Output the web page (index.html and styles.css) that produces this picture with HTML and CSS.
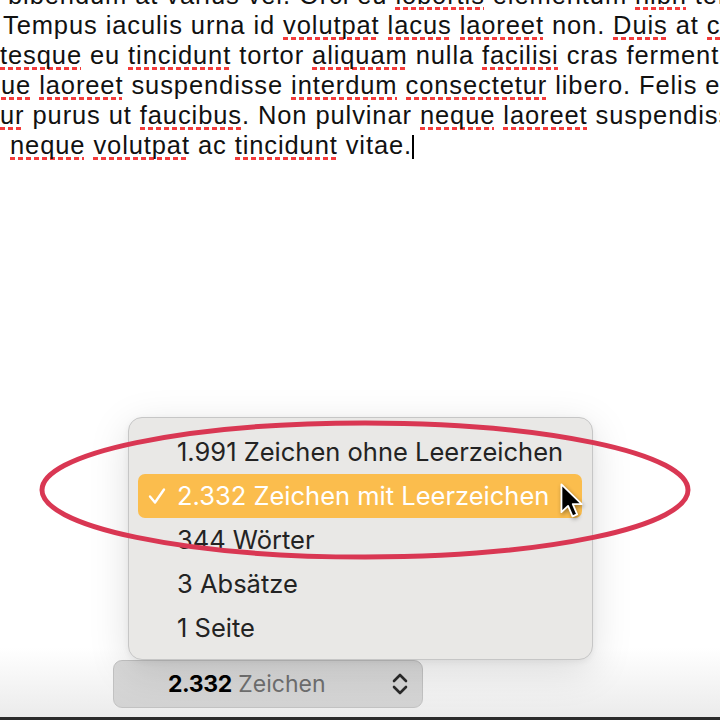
FILE: index.html
```html
<!DOCTYPE html>
<html lang="de">
<head>
    <meta charset="UTF-8">
    <meta name="viewport" content="width=device-width, initial-scale=1.0">
    <title>Zeichenzahl</title>
    <link rel="stylesheet" href="styles.css">
</head>
<body>
    <div class="doc">
        <div class="line l1">bibendum at varius vel. Orci eu <span class="typo">lobortis</span> elementum <span class="typo">nibh</span> tellus</div>
        <div class="line l2">Tempus iaculis urna id <span class="typo">volutpat</span> <span class="typo">lacus</span> <span class="typo">laoreet</span> non. <span class="typo">Duis</span> at <span class="typo">consequat</span></div>
        <div class="line l3"><span class="typo">tesque</span> eu <span class="typo">tincidunt</span> tortor <span class="typo">aliquam</span> nulla <span class="typo">facilisi</span> cras fermentum</div>
        <div class="line l4"><span class="typo">ue</span> <span class="typo">laoreet</span> suspendisse <span class="typo">interdum</span> <span class="typo">consectetur</span> libero. Felis eget</div>
        <div class="line l5"><span class="typo">ur</span> purus ut <span class="typo">faucibus</span>. Non pulvinar <span class="typo">neque</span> <span class="typo">laoreet</span> suspendisse</div>
        <div class="line l6"><span class="typo">neque</span> <span class="typo">volutpat</span> ac <span class="typo">tincidunt</span> vitae.<span class="caret"></span></div>
    </div>

    <div class="statusbar">
        <div class="popup">
            <ul class="menu">
                <li>1.991 Zeichen ohne Leerzeichen</li>
                <li class="selected">
                    <svg class="check" width="20" height="20" viewBox="0 0 20 20">
                        <path d="M3 10.5 L8 16.5 L17 3.5" fill="none" stroke="#fff" stroke-width="2.4" stroke-linecap="round" stroke-linejoin="round"/>
                    </svg>
                    2.332 Zeichen mit Leerzeichen
                </li>
                <li>344 Wörter</li>
                <li>3 Absätze</li>
                <li>1 Seite</li>
            </ul>
            <button class="count-btn">
                <span class="count"><b>2.332</b> Zeichen</span>
                <svg class="updown" width="18" height="24" viewBox="0 0 18 24">
                    <path d="M3 9 L9 3 L15 9 M3 15 L9 21 L15 15" fill="none" stroke="#2a2a2a" stroke-width="2.6" stroke-linecap="round" stroke-linejoin="round"/>
                </svg>
            </button>
        </div>
    </div>

    <!-- annotation on top of the screenshot -->
    <svg class="mark" width="720" height="720" viewBox="0 0 720 720">
        <ellipse cx="365" cy="490" rx="323" ry="67" fill="none" stroke="#d93753" stroke-width="5"/>
    </svg>
    <svg class="pointer" width="29" height="41" viewBox="0 0 24 34">
        <path d="M2 2 L2 25 L7.5 19.8 L11.2 28.5 L15 26.8 L11.4 18.4 L18.8 18.4 Z" fill="#000" stroke="#fff" stroke-width="1.5" stroke-linejoin="round"/>
    </svg>
</body>
</html>
```

FILE: styles.css
```css
body {
    margin: 0;
    width: 720px;
    height: 720px;
    overflow: hidden;
    position: relative;
    background-color: #fff;
    display: flex;
    flex-direction: column;
}
.doc {
    margin-top: -20px;
    font-family: 'Liberation Sans', Arial, sans-serif;
    font-size: 25.5px;
    line-height: 30px;
    letter-spacing: 0.9px;
    color: #111;
}
.line {
    white-space: nowrap;
}
.l1 { padding-left: 8px; }
.l2 { padding-left: 3px; }
.l3 { padding-left: 0; }
.l4 { padding-left: 1px; }
.l5 { padding-left: 0; }
.l6 { padding-left: 10px; }
.typo {
    padding-bottom: 1px;
    background: repeating-linear-gradient(90deg, #f33b3b 0 5px, transparent 5px 8px) left bottom / calc(100% - 1px) 3px no-repeat;
}
.caret {
    display: inline-block;
    width: 2px;
    height: 24px;
    vertical-align: -5px;
    background-color: #000;
}
.statusbar {
    margin-top: auto;
    height: 80px;
    padding: 20px 0 0 113px;
    box-sizing: border-box;
    background: linear-gradient(#fff 10%, #ebebeb);
    border-bottom: 3px solid #2b2b2b;
}
.popup {
    position: relative;
    width: 310px;
}
.menu {
    position: absolute;
    left: 15px;
    bottom: 100%;
    width: 465px;
    box-sizing: border-box;
    margin: 0;
    padding: 12px 10px 9px 9px;
    list-style: none;
    background-color: #e9e8e6;
    border: 1px solid #c6c6c6;
    border-radius: 14px;
    box-shadow: 0 10px 40px rgba(0,0,0,0.13), 0 2px 6px rgba(0,0,0,0.06);
    font-family: Inter, 'Noto Sans', sans-serif;
    font-size: 25.5px;
    color: #232323;
}
.menu li {
    height: 44px;
    line-height: 44px;
    padding-left: 39px;
    border-radius: 7px;
    position: relative;
    white-space: nowrap;
}
.menu li.selected {
    background-color: #fbbd4d;
    color: #fff;
}
.check {
    position: absolute;
    left: 9px;
    top: 12px;
}
.count-btn {
    display: flex;
    align-items: center;
    width: 310px;
    height: 48px;
    padding: 0 13px 0 54px;
    border: 1px solid #c2c2c2;
    border-radius: 9px;
    background: linear-gradient(#d9d9d9, #d3d3d3);
    font-family: Inter, 'Noto Sans', sans-serif;
    font-size: 23px;
    color: #6f6f6f;
    cursor: pointer;
}
.count b {
    color: #000;
    letter-spacing: -0.4px;
}
.updown {
    margin-left: auto;
}
.mark {
    position: absolute;
    left: 0;
    top: 0;
    pointer-events: none;
}
.pointer {
    position: absolute;
    left: 559px;
    top: 482px;
    filter: drop-shadow(1px 2px 2px rgba(0,0,0,0.35));
}
```
